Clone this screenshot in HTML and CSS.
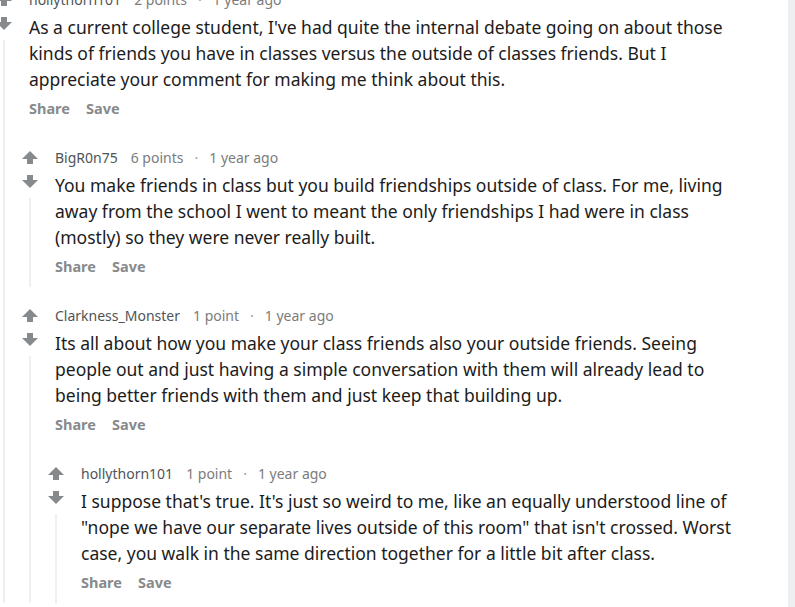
FILE: index.html
```html
<!DOCTYPE html>
<html lang="en">
<head>
<meta charset="utf-8">
<title>Comments</title>
<link rel="stylesheet" href="styles.css">
</head>
<body>
<main class="panel">
  <div class="thread">
    <div class="comment">
      <div class="gutter">
        <svg class="vote" viewBox="0 0 16 13"><path d="M8 0 L16 8 H11 V13 H5 V8 H0 Z"/></svg>
        <svg class="vote down" viewBox="0 0 16 13"><path d="M8 13 L16 5 H11 V0 H5 V5 H0 Z"/></svg>
        <div class="line"></div>
      </div>
      <div class="entry">
        <div class="meta"><span class="author">hollythorn101</span><span>2 points</span><span class="dot">·</span><span>1 year ago</span></div>
        <p class="body">As a current college student, I've had quite the internal debate going on about those kinds of friends you have in classes versus the outside of classes friends. But I appreciate your comment for making me think about this.</p>
        <div class="actions"><span>Share</span><span>Save</span></div>
      </div>
      <div class="children">
        <div class="comment">
          <div class="gutter">
            <svg class="vote" viewBox="0 0 16 13"><path d="M8 0 L16 8 H11 V13 H5 V8 H0 Z"/></svg>
            <svg class="vote down" viewBox="0 0 16 13"><path d="M8 13 L16 5 H11 V0 H5 V5 H0 Z"/></svg>
            <div class="line"></div>
          </div>
          <div class="entry">
            <div class="meta"><span class="author">BigR0n75</span><span>6 points</span><span class="dot">·</span><span>1 year ago</span></div>
            <p class="body">You make friends in class but you build friendships outside of class. For me, living away from the school I went to meant the only friendships I had were in class (mostly) so they were never really built.</p>
            <div class="actions"><span>Share</span><span>Save</span></div>
          </div>
        </div>
        <div class="comment">
          <div class="gutter">
            <svg class="vote" viewBox="0 0 16 13"><path d="M8 0 L16 8 H11 V13 H5 V8 H0 Z"/></svg>
            <svg class="vote down" viewBox="0 0 16 13"><path d="M8 13 L16 5 H11 V0 H5 V5 H0 Z"/></svg>
            <div class="line"></div>
          </div>
          <div class="entry">
            <div class="meta"><span class="author">Clarkness_Monster</span><span>1 point</span><span class="dot">·</span><span>1 year ago</span></div>
            <p class="body">Its all about how you make your class friends also your outside friends. Seeing people out and just having a simple conversation with them will already lead to being better friends with them and just keep that building up.</p>
            <div class="actions"><span>Share</span><span>Save</span></div>
          </div>
          <div class="children">
            <div class="comment">
              <div class="gutter">
                <svg class="vote" viewBox="0 0 16 13"><path d="M8 0 L16 8 H11 V13 H5 V8 H0 Z"/></svg>
                <svg class="vote down" viewBox="0 0 16 13"><path d="M8 13 L16 5 H11 V0 H5 V5 H0 Z"/></svg>
                <div class="line"></div>
              </div>
              <div class="entry">
                <div class="meta"><span class="author">hollythorn101</span><span>1 point</span><span class="dot">·</span><span>1 year ago</span></div>
                <p class="body">I suppose that's true. It's just so weird to me, like an equally understood line of "nope we have our separate lives outside of this room" that isn't crossed. Worst case, you walk in the same direction together for a little bit after class.</p>
                <div class="actions"><span>Share</span><span>Save</span></div>
              </div>
            </div>
          </div>
        </div>
      </div>
    </div>
  </div>
</main>
</body>
</html>
```

FILE: styles.css
```css
html, body {
  margin: 0;
  padding: 0;
}
body {
  background: #edeff1;
  font-family: "Noto Sans", "Liberation Sans", Arial, sans-serif;
  color: #1c1c1c;
  overflow: hidden;
  height: 607px;
}
.panel {
  width: 788px;
  height: 607px;
  background: #ffffff;
  box-sizing: border-box;
  padding-right: 43px;
  overflow: hidden;
}
.thread {
  margin-top: -10px;
  margin-left: -9px;
}
.comment {
  display: grid;
  grid-template-columns: 26px 1fr;
  grid-template-rows: auto auto;
}
.comment + .comment {
  margin-top: 19px;
}
.gutter {
  grid-column: 1;
  grid-row: 1 / span 2;
  display: flex;
  flex-direction: column;
  align-items: center;
}
.vote {
  width: 16px;
  height: 13px;
  fill: #878a8c;
  margin-top: 3px;
  flex: none;
}
.vote.down {
  margin-top: 11px;
}
.line {
  flex: 1;
  width: 2px;
  background: #edeff1;
  margin-top: 10px;
}
.entry {
  grid-column: 2;
  grid-row: 1;
  padding-left: 12px;
  padding-bottom: 11px;
}
.children {
  grid-column: 2;
  grid-row: 2;
  padding-top: 19px;
}
.meta {
  display: flex;
  gap: 11px;
  height: 20px;
  line-height: 20px;
  font-size: 14px;
  color: #7c7c7c;
  margin-bottom: 4px;
}
.meta .author {
  color: #4f5457;
  margin-right: 2px;
}
.meta .dot {
  color: #9a9a9a;
}
.body {
  margin: 0;
  font-size: 17.5px;
  line-height: 26px;
}
.actions {
  display: flex;
  gap: 16px;
  margin-top: 6px;
  height: 20px;
  line-height: 20px;
  font-size: 14.5px;
  font-weight: 700;
  color: #878a8c;
}
```
